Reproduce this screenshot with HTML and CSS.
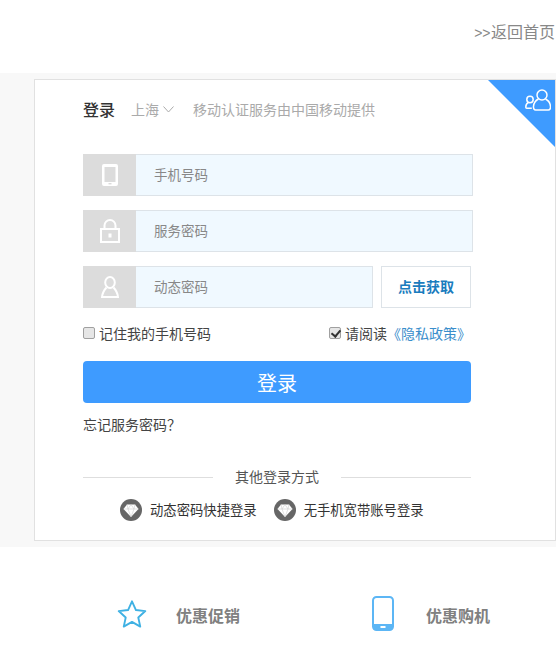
FILE: index.html
```html
<!DOCTYPE html>
<html>
    <head>
        <meta charset="utf-8">
        <title>登录</title>
        <link rel="stylesheet" href="styles.css">
    </head>
    <body>
        <div class="top">
            <a class="back"><span class="back-arrow">&gt;&gt;</span>返回首页</a>
        </div>

        <div class="band">
            <div class="card">
                <div class="corner">
                    <svg width="26" height="22" viewBox="0 0 26 22" fill="none" stroke="#fff" stroke-width="1.500">
                        <circle cx="5" cy="10.500" r="3.200"/>
                        <path d="M3.200 13.500C1.500 14.500.8 16.300.8 18.200c0 .6.400 1 1 1h5"/>
                        <circle cx="17" cy="6" r="5"/>
                        <path d="M13.500 10c-2.800 1.300-4.700 4-5 7.500-.2 2 .6 3.500 2.200 3.500h12.600c1.600 0 2.400-1.500 2.200-3.500-.3-3.500-2.200-6.200-5-7.500"/>
                    </svg>
                </div>

                <div class="head">
                    <span class="head-title">登录</span>
                    <span class="head-city">上海
                        <svg width="11" height="7" viewBox="0 0 11 7" fill="none" stroke="#aaa"><path d="M.5.500l5 5.500 5-5.500"/></svg>
                    </span>
                    <span class="head-note">移动认证服务由中国移动提供</span>
                </div>

                <div class="field">
                    <div class="field-icon">
                        <svg width="16" height="22" viewBox="0 0 16 22">
                            <path fill="#fff" fill-rule="evenodd" d="M2 0h12a2 2 0 0 1 2 2v18a2 2 0 0 1-2 2H2a2 2 0 0 1-2-2V2a2 2 0 0 1 2-2zm.500 3v15h11V3z"/>
                            <rect x="6.500" y="19.300" width="3" height="1" fill="#ccc"/>
                        </svg>
                    </div>
                    <div class="field-text">手机号码</div>
                </div>

                <div class="field">
                    <div class="field-icon">
                        <svg width="20" height="24" viewBox="0 0 20 24">
                            <path d="M4.500 10V6.500a5.500 5.500 0 0 1 11 0V10" fill="none" stroke="#fff" stroke-width="2"/>
                            <rect x="1" y="10" width="18" height="13" fill="none" stroke="#fff" stroke-width="2"/>
                            <rect x="8.500" y="14.500" width="3" height="4" fill="#fff"/>
                        </svg>
                    </div>
                    <div class="field-text">服务密码</div>
                </div>

                <div class="code-row">
                    <div class="field field-short">
                        <div class="field-icon">
                            <svg width="18" height="22" viewBox="0 0 18 22" fill="none" stroke="#fff" stroke-width="2">
                                <ellipse cx="9" cy="6.500" rx="4.800" ry="5.500"/>
                                <path d="M5.500 11.500C3 14 1.500 17 1 21h16c-.5-4-2-7-4.500-9.500"/>
                            </svg>
                        </div>
                        <div class="field-text">动态密码</div>
                    </div>
                    <button class="code-btn">点击获取</button>
                </div>

                <div class="options">
                    <label class="check"><input type="checkbox">记住我的手机号码</label>
                    <label class="check"><input type="checkbox" checked>请阅读<a class="policy">《隐私政策》</a></label>
                </div>

                <button class="submit">登录</button>

                <div class="forgot">忘记服务密码？</div>

                <div class="other">
                    <span class="other-line"></span>
                    <span class="other-text">其他登录方式</span>
                    <span class="other-line"></span>
                </div>

                <div class="alt">
                    <a class="alt-link">
                        <svg class="gem" width="22" height="22" viewBox="0 0 22 22">
                            <circle cx="11" cy="11" r="11" fill="#666"/>
                            <path d="M7 5.500h8l3.500 4.500L11 18 3.500 10z" fill="#fff"/>
                            <path d="M3.500 10h15M8 10l3 8 3-8M7 5.500l1 4.500 3-4.500 3 4.500 1-4.500" fill="none" stroke="#ccc" stroke-width=".6"/>
                        </svg>
                        <span class="alt-text">动态密码快捷登录</span>
                    </a>
                    <a class="alt-link">
                        <svg class="gem" width="22" height="22" viewBox="0 0 22 22">
                            <circle cx="11" cy="11" r="11" fill="#666"/>
                            <path d="M7 5.500h8l3.500 4.500L11 18 3.500 10z" fill="#fff"/>
                            <path d="M3.500 10h15M8 10l3 8 3-8M7 5.500l1 4.500 3-4.500 3 4.500 1-4.500" fill="none" stroke="#ccc" stroke-width=".6"/>
                        </svg>
                        <span class="alt-text">无手机宽带账号登录</span>
                    </a>
                </div>
            </div>
        </div>

        <div class="promo">
            <div class="promo-item">
                <svg class="star" width="30" height="29" viewBox="0 0 32 30" fill="none" stroke="#3fb1e3" stroke-width="2" stroke-linejoin="round">
                    <path d="M16 2l4.200 9.300 10 1.100-7.500 6.800 2.100 9.800L16 23.900 7.200 29l2.100-9.800-7.500-6.800 10-1.100z"/>
                </svg>
                <span class="promo-label">优惠促销</span>
            </div>
            <div class="promo-item promo-phone">
                <svg class="phone" width="22" height="35" viewBox="0 0 22 35">
                    <rect x="1" y="1" width="20" height="33" rx="3.500" fill="#fff" stroke="#5cb6f5" stroke-width="2"/>
                    <path d="M1 28h20v3a3 3 0 0 1-3 3H4a3 3 0 0 1-3-3z" fill="#5cb6f5"/>
                    <rect x="8.500" y="30" width="5" height="2" fill="#fff"/>
                </svg>
                <span class="promo-label">优惠购机</span>
            </div>
        </div>
    </body>
</html>
```

FILE: styles.css
```css
* {
    box-sizing: border-box;
}
body {
    margin: 0;
    background-color: #fff;
    color: #333;
    font-family: "Noto Sans CJK SC", "Liberation Sans", sans-serif;
    font-size: 14px;
}

/* top bar */
.top {
    height: 73px;
    display: flex;
    justify-content: flex-end;
    align-items: center;
    padding: 0 1px 10px 0;
}
.back {
    color: #888;
    font-size: 16px;
    line-height: 22px;
}
.back-arrow {
    font-family: "Liberation Sans", sans-serif;
    font-size: 14px;
    margin-right: 0.500px;
}

/* grey band and card */
.band {
    height: 474px;
    padding: 6px 0 6px 34px;
    background-color: #f8f8f8;
}
.card {
    position: relative;
    height: 462px;
    padding: 18px 0 0 48px;
    background-color: #fff;
    border: 1px solid #e1e1e1;
}
.corner {
    position: absolute;
    top: 0;
    right: 0;
    width: 67px;
    height: 67px;
    background-color: #3e9bff;
    clip-path: polygon(0 0, 100% 0, 100% 100%);
}
.corner svg {
    position: absolute;
    top: 9px;
    right: 4px;
}

.head {
    display: flex;
    align-items: center;
    height: 22px;
    margin-bottom: 34px;
}
.head-title {
    width: 48px;
    color: #333;
    font-size: 16px;
    font-weight: 500;
}
.head-city {
    display: flex;
    align-items: center;
    gap: 4px;
    width: 62px;
    color: #aaa;
}
.head-note {
    color: #aaa;
}

/* input rows */
.field {
    display: flex;
    width: 390px;
    height: 42px;
    margin-bottom: 14px;
}
.field-icon {
    width: 53px;
    display: flex;
    justify-content: center;
    align-items: center;
    background-color: #dcdcdc;
}
.field-text {
    flex: 1;
    padding-left: 18px;
    line-height: 38px;
    color: #888;
    font-size: 13.500px;
    background-color: #f0f9ff;
    border: 1px solid #dde3e8;
    border-left: none;
}
.code-row {
    display: flex;
    gap: 8px;
}
.field-short {
    width: 290px;
}
.code-btn {
    width: 90px;
    height: 42px;
    padding: 0 0 2px;
    color: #1a7cbe;
    font-family: inherit;
    font-size: 14px;
    font-weight: 700;
    background-color: #fff;
    border: 1px solid #dde3e8;
}

.options {
    display: flex;
    justify-content: space-between;
    width: 388px;
    height: 20px;
    margin-top: 1px;
    line-height: 20px;
}
.check {
    display: flex;
    align-items: center;
    color: #444;
}
.check input {
    appearance: none;
    position: relative;
    width: 12px;
    height: 12px;
    margin: 0 4px 0 0;
    background-color: #e6e6e6;
    border: 1px solid #a0a0a0;
    border-radius: 2px;
}
.check input:checked::after {
    content: "";
    position: absolute;
    top: 0;
    left: 3px;
    width: 4px;
    height: 7px;
    border: solid #333;
    border-width: 0 2px 2px 0;
    transform: rotate(40deg);
}
.policy {
    color: #3a8ecb;
    text-spacing-trim: space-all;
}

.submit {
    display: block;
    width: 388px;
    height: 42px;
    margin-top: 18px;
    padding: 0;
    color: #fff;
    font-family: inherit;
    font-size: 20px;
    background-color: #3e9bff;
    border: none;
    border-radius: 4px;
}
.forgot {
    margin-top: 11px;
    line-height: 20px;
    color: #444;
}

.other {
    display: flex;
    align-items: center;
    justify-content: space-between;
    width: 388px;
    height: 20px;
    margin-top: 33px;
    color: #555;
}
.other-text {
    margin-bottom: 2px;
}
.other-line {
    width: 130px;
    height: 1px;
    background-color: #dedede;
}

.alt {
    display: flex;
    gap: 17px;
    height: 22px;
    margin: 12px 0 0 37px;
}
.alt-link {
    display: flex;
    align-items: center;
    gap: 8px;
    color: #333;
    font-size: 13.330px;
}
.alt-text {
    margin-bottom: 2px;
}
.gem {
    flex: none;
}

/* bottom links */
.promo {
    display: flex;
    height: 111px;
    padding: 0 0 0 117px;
    align-items: flex-start;
}
.promo-item {
    flex: none;
    display: flex;
    align-items: center;
    height: 36px;
    margin-top: 50px;
    gap: 29px;
    width: 255px;
}
.promo-phone {
    gap: 32px;
    width: 184px;
}
.star, .phone {
    margin-bottom: 3px;
}
.promo-label {
    color: #808080;
    font-size: 16px;
    font-weight: 700;
}
```
